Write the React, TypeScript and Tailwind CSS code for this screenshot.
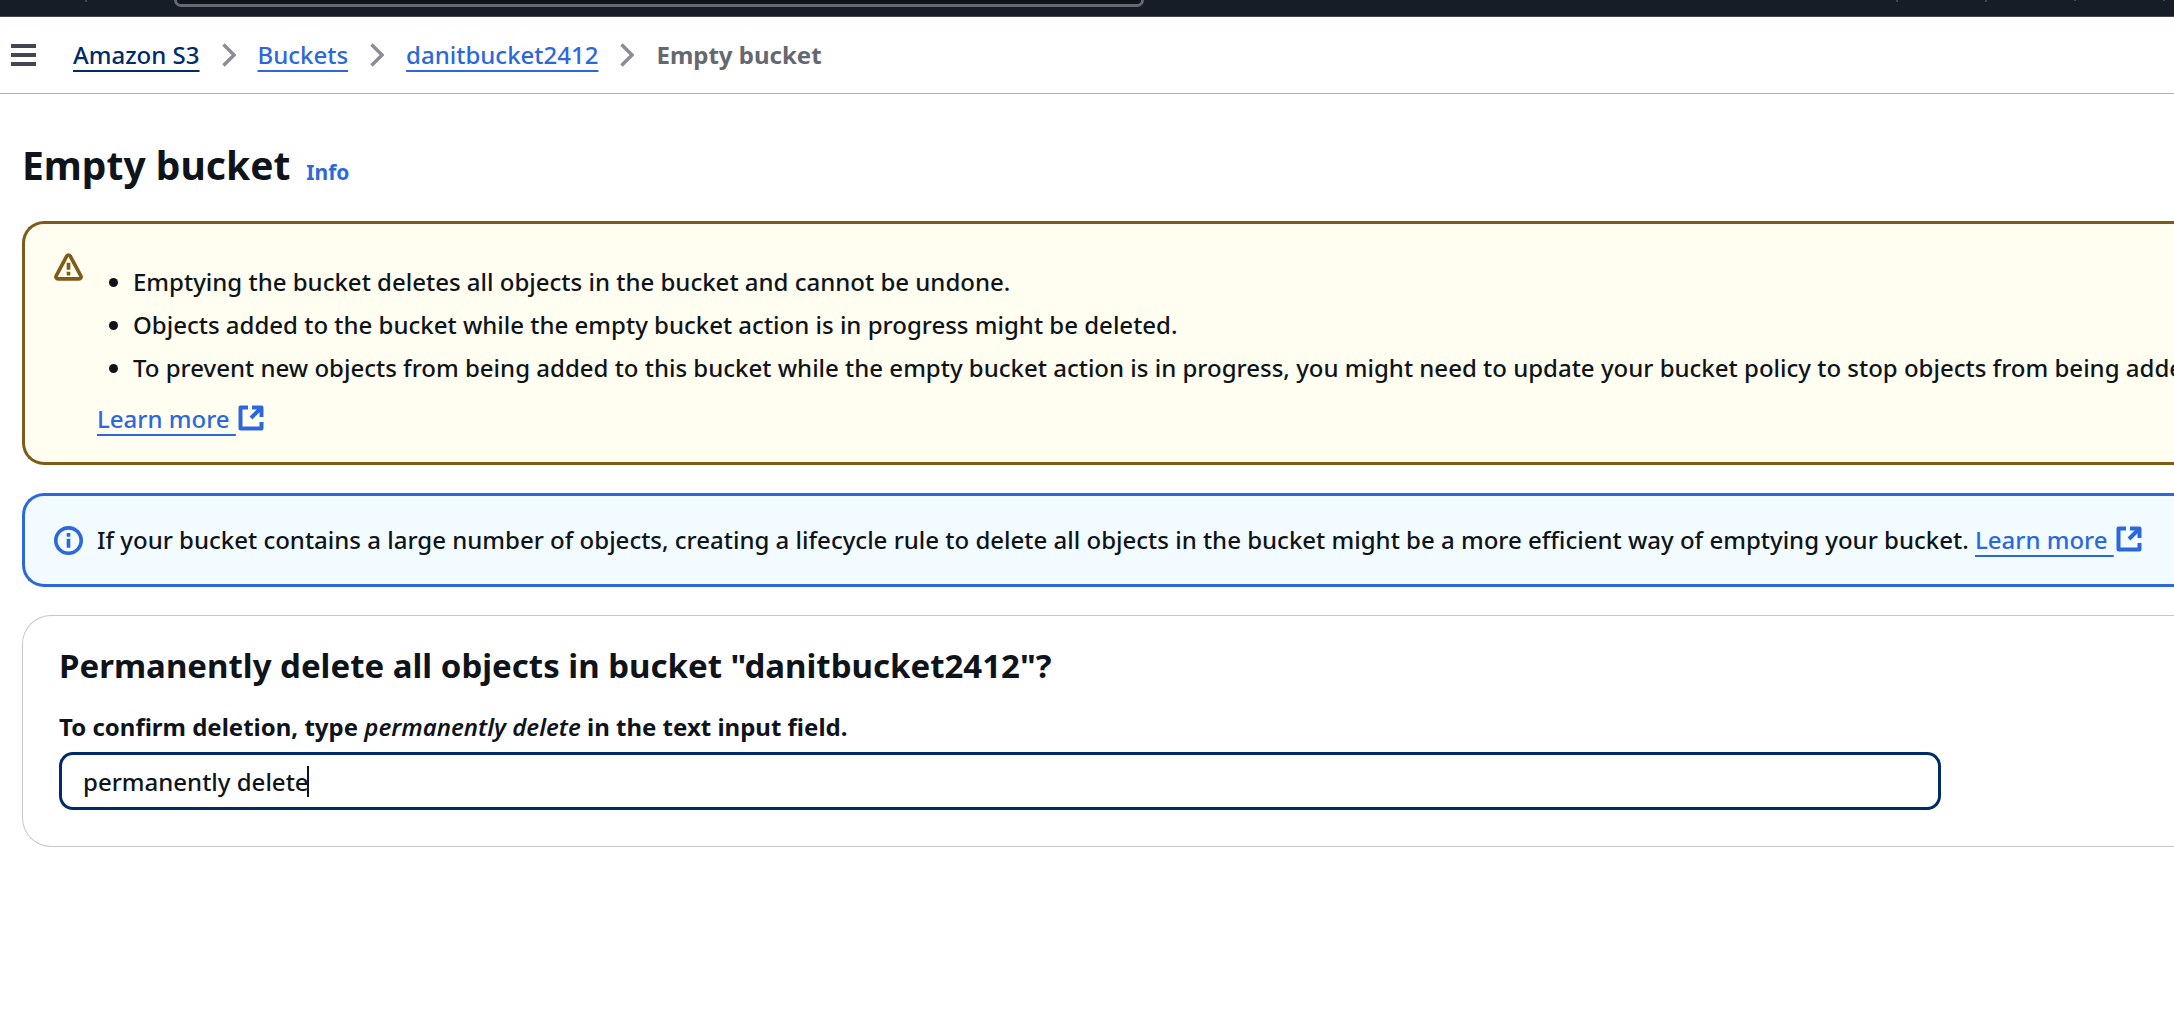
import React, { useState } from "react";

function ChevronIcon() {
  return (
    <svg aria-hidden="true" className="h-6 w-[14px] shrink-0" viewBox="0 0 14 24" fill="none" stroke="#8c8c94" strokeWidth="3.4">
      <path d="M1.5 1.5L12 12L1.5 22.5" />
    </svg>
  );
}

function WarningIcon() {
  return (
    <svg aria-hidden="true" className="size-[29px] shrink-0" viewBox="0 0 16 16" fill="none" stroke="#7f5b18" strokeWidth="2" strokeLinejoin="round">
      <path d="M7.1 1.6a1.05 1.05 0 0 1 1.8 0l5.9 11c.4.8-.1 1.7-1 1.7H2.2c-.9 0-1.4-.9-1-1.7z" />
      <path d="M8 5.4v3.9M8 10.4v2" />
    </svg>
  );
}

function InfoIcon() {
  return (
    <svg aria-hidden="true" className="size-[29px] shrink-0" viewBox="0 0 16 16" fill="none" stroke="#2c68dc" strokeWidth="2">
      <circle cx="8" cy="8" r="7" />
      <path d="M8 3.9v2M8 7v5" />
    </svg>
  );
}

function ExternalIcon() {
  return (
    <svg aria-hidden="true" className="ml-0.5 inline-block size-[26px] align-[-3px]" viewBox="0 0 26 26" fill="none" stroke="currentColor" strokeWidth="4" strokeLinejoin="round">
      <path d="M10 2.5H2.5v21h21V17" />
      <path d="M14 2.5h9.5V12" />
      <path d="M23 3L13 13" />
    </svg>
  );
}

const underline = "underline decoration-2 underline-offset-[6px]";

function LearnMore() {
  return (
    <a href="#learn-more" className="whitespace-nowrap text-[#2c68dc]">
      <span className={`whitespace-pre ${underline}`}>{"Learn more "}</span>
      <ExternalIcon />
    </a>
  );
}

const warnings = [
  "Emptying the bucket deletes all objects in the bucket and cannot be undone.",
  "Objects added to the bucket while the empty bucket action is in progress might be deleted.",
  "To prevent new objects from being added to this bucket while the empty bucket action is in progress, you might need to update your bucket policy to stop objects from being added.",
];

export default function App() {
  const [confirmation, setConfirmation] = useState("permanently delete");
  return (
    <div className="min-h-screen overflow-hidden bg-white font-['Noto_Sans',sans-serif] text-2xl leading-9 font-medium text-[#0f141a]">
      <header className="flex h-[17px] items-start overflow-hidden border-b border-[#424650] bg-[#161d26]">
        <div className="ml-[85px] h-[2px] w-[2px] bg-[#424650]" />
        <div className="ml-[87px] h-[7px] w-[970px] rounded-b-2xl border-x-[3px] border-b-[3px] border-[#656871] bg-[#0f141a]" />
        <div className="ml-auto flex gap-[87px] pr-[9px]">
          <div className="h-[2px] w-[2px] bg-[#424650]" />
          <div className="h-[2px] w-[2px] bg-[#424650]" />
          <div className="h-px w-[2px] bg-[#424650]" />
          <div className="h-px w-[2px] bg-[#424650]" />
        </div>
      </header>

      <nav aria-label="Breadcrumbs" className="flex h-[77px] items-center border-b border-[#b0b0b5] pl-[11px]">
        <button type="button" aria-label="Open navigation" className="mr-[37px] shrink-0">
          <svg className="h-6 w-[25px]" viewBox="0 0 25 24" stroke="#424650" strokeWidth="4">
            <path d="M0 3h25M0 12h25M0 21h25" />
          </svg>
        </button>
        <ol className="flex items-center gap-[22px] whitespace-nowrap">
          <li><a href="#s3" className={`text-[#002b66] ${underline}`}>Amazon S3</a></li>
          <li><ChevronIcon /></li>
          <li><a href="#buckets" className={`text-[#2c68dc] ${underline}`}>Buckets</a></li>
          <li><ChevronIcon /></li>
          <li><a href="#bucket" className={`text-[#2c68dc] ${underline}`}>danitbucket2412</a></li>
          <li><ChevronIcon /></li>
          <li aria-current="page" className="font-bold text-[#656871]">Empty bucket</li>
        </ol>
      </nav>

      <main className="pt-[47px] pl-[22px]">
        <div className="flex items-baseline gap-4">
          <h1 className="text-[39px] leading-[48px] font-bold">Empty bucket</h1>
          <a href="#info" className="text-[21px] font-bold text-[#2c68dc]">Info</a>
        </div>

        <section className="mt-[31px] flex gap-[14px] rounded-l-[22px] border-y-[3px] border-l-[3px] border-[#7f5b18] bg-[#fffef0] pt-[29px] pb-[25px] pl-[29px]">
          <WarningIcon />
          <div className="min-w-0 flex-1 pt-[11px]">
            <ul className="flex list-disc flex-col gap-[7px] pl-9 whitespace-nowrap">
              {warnings.map((text) => <li key={text}>{text}</li>)}
            </ul>
            <p className="mt-[15px]"><LearnMore /></p>
          </div>
        </section>

        <section className="mt-7 flex items-center gap-[14px] rounded-l-[22px] border-y-[3px] border-l-[3px] border-[#2c68dc] bg-[#f2fbff] py-[26px] pl-[29px]">
          <InfoIcon />
          <p className="whitespace-nowrap">
            If your bucket contains a large number of objects, creating a lifecycle rule to delete all objects in the bucket might be a more efficient way of emptying your bucket. <LearnMore />
          </p>
        </section>

        <section className="mt-7 rounded-l-[29px] border-y border-l border-[#c6c6cd] pt-[30px] pb-9 pl-9">
          <h2 className="text-[33px] leading-10 font-bold">Permanently delete all objects in bucket "danitbucket2412"?</h2>
          <label htmlFor="confirm" className="mt-[23px] block font-bold">
            To confirm deletion, type <em className="font-semibold">permanently delete</em> in the text input field.
          </label>
          <div className="relative mt-[7px] w-[89%]">
            <input
              id="confirm"
              type="text"
              value={confirmation}
              onChange={(e) => setConfirmation(e.target.value)}
              className="block h-[58px] w-full rounded-[14px] border-[3px] border-[#002b66] bg-white px-[21px] caret-transparent outline-none"
            />
            <span aria-hidden="true" className="absolute top-[14px] left-[248px] h-[31px] w-[2px] bg-[#0f141a]" />
          </div>
        </section>
      </main>
    </div>
  );
}
